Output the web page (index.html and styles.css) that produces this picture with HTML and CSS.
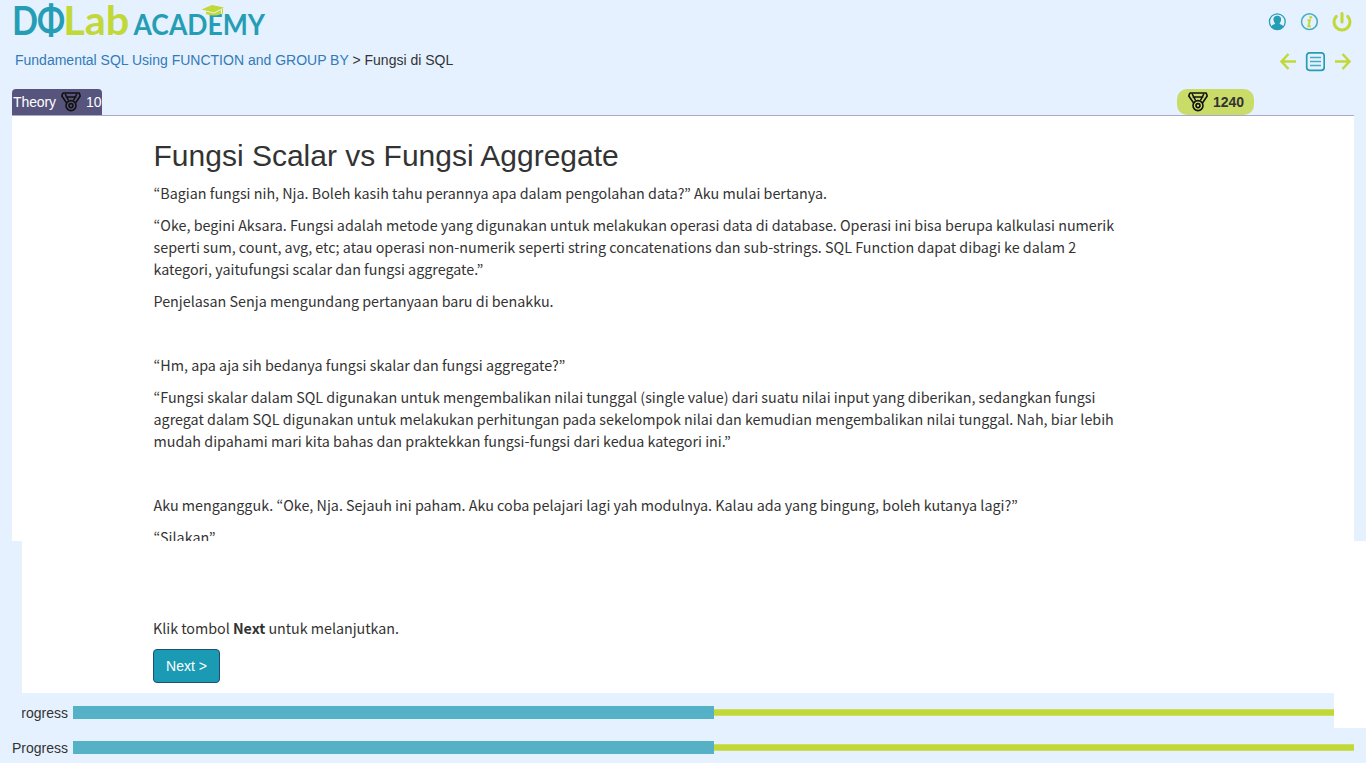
FILE: index.html
```html
<!DOCTYPE html>
<html lang="id">
<head>
<meta charset="utf-8">
<title>DQLab Academy</title>
<link rel="stylesheet" href="styles.css">
</head>
<body>
<svg class="defs" width="0" height="0">
  <symbol id="medal" viewBox="0 0 20 20">
    <g fill="none" stroke="#111" stroke-width="1.6" stroke-linejoin="round">
      <path d="M1.800 1H18.200L19.200 4L14.300 11.200M1.800 1L.8 4L5.800 11.200M1 3.500L1.800 1M4.600 5H15.400M4.200 2L7.600 8.500M15.800 2L12.400 8.500"/>
      <circle cx="10" cy="13.600" r="5"/>
      <circle cx="10" cy="13.600" r="2"/>
    </g>
  </symbol>
</svg>
<header class="top">
  <svg class="logo" width="256" height="36" viewBox="12 2 256 36">
    <g class="logo-text teal">
      <text x="12" y="34.800" font-size="41" textLength="26" lengthAdjust="spacingAndGlyphs">D</text>
      <text x="37" y="34.800" font-size="41" textLength="28" lengthAdjust="spacingAndGlyphs">Φ</text>
      <text x="133.500" y="35" font-size="29" textLength="131.500" lengthAdjust="spacingAndGlyphs">ACADEMY</text>
    </g>
    <text class="logo-text lime" x="63.200" y="34.800" font-size="41" textLength="66" lengthAdjust="spacingAndGlyphs">Lab</text>
    <path d="M201.500 9.500L212 5L224 7.500L214 12.500Z" fill="#c1d837"/>
    <path d="M206 11.500L214 13.500L221 10V14Q214 17 206 14Z" fill="#c1d837"/>
    <path d="M222.500 8.500V14" stroke="#c1d837" fill="none"/>
  </svg>
  <nav class="tools">
    <svg width="18" height="18" viewBox="0 0 18 18">
      <circle cx="9.300" cy="8.700" r="7.900" fill="#e5f1ff" stroke="#259eb5" stroke-width="1.300"/>
      <path d="M9.300 2.800C12.300 2.800 13.500 5 13 7.200C12.800 8.700 12.100 9.400 11.700 10.300V11C13.300 11.700 15.100 12 15.500 13.700Q12.800 16.700 9.300 16.700Q5.800 16.700 3.100 13.700C3.500 12 5.300 11.700 6.900 11V10.300C6.500 9.400 5.800 8.700 5.600 7.200C5.100 5 6.300 2.800 9.300 2.800Z" fill="#259eb5"/>
    </svg>
    <svg width="18" height="18" viewBox="0 0 18 18">
      <circle cx="9.400" cy="8.700" r="7.900" fill="none" stroke="#47acc0" stroke-width="1.500"/>
      <path d="M7.400 7.300H9.800L8.400 13.200H10.800" fill="none" stroke="#c1d837" stroke-width="2"/>
      <circle cx="10.700" cy="4.300" r="1.400" fill="#c1d837"/>
    </svg>
    <svg width="20" height="20" viewBox="0 0 20 20">
      <path d="M4.300 4.400A8 8 0 1 0 15.700 4.400M10 1.600V10" fill="none" stroke="#c1d837" stroke-width="3" stroke-linecap="round"/>
    </svg>
  </nav>
</header>
<div class="crumbs">
  <div class="path"><a>Fundamental SQL Using FUNCTION and GROUP BY</a> &gt; Fungsi di SQL</div>
  <nav class="pager">
    <svg width="18" height="18" viewBox="0 0 18 18"><path d="M10.500 1L3.500 8.500L10.500 16M3.500 8.500H18" fill="none" stroke="#c1d837" stroke-width="2.500"/></svg>
    <svg width="20" height="20" viewBox="0 0 20 20"><rect x="1.700" y=".8" width="17.500" height="17.500" rx="3" fill="none" stroke="#259eb5" stroke-width="1.700"/><path d="M5 5.500H16M5 9.500H16M5 13.500H16" stroke="#47acc0" stroke-width="1.400"/></svg>
    <svg width="18" height="18" viewBox="0 0 18 18"><path d="M8.500 1L15.500 8.500L8.500 16M15.500 8.500H1" fill="none" stroke="#c1d837" stroke-width="2.500"/></svg>
  </nav>
</div>
<div class="tabs">
  <div class="tab"><span class="kind">Theory</span><svg width="20" height="20"><use href="#medal"/></svg><span>10</span></div>
  <div class="score"><svg width="20" height="20"><use href="#medal"/></svg><b>1240</b></div>
</div>
<main class="lesson">
  <h1>Fungsi Scalar vs Fungsi Aggregate</h1>
  <p>“Bagian fungsi nih, Nja. Boleh kasih tahu perannya apa dalam pengolahan data?” Aku mulai bertanya.</p>
  <p>“Oke, begini Aksara. Fungsi adalah metode yang digunakan untuk melakukan operasi data di database. Operasi ini bisa berupa kalkulasi numerik<br>seperti sum, count, avg, etc; atau operasi non-numerik seperti string concatenations dan sub-strings. SQL Function dapat dibagi ke dalam 2<br>kategori, yaitufungsi scalar dan fungsi aggregate.”</p>
  <p>Penjelasan Senja mengundang pertanyaan baru di benakku.</p>
  <p>&nbsp;</p>
  <p>“Hm, apa aja sih bedanya fungsi skalar dan fungsi aggregate?”</p>
  <p>“Fungsi skalar dalam SQL digunakan untuk mengembalikan nilai tunggal (single value) dari suatu nilai input yang diberikan, sedangkan fungsi<br>agregat dalam SQL digunakan untuk melakukan perhitungan pada sekelompok nilai dan kemudian mengembalikan nilai tunggal. Nah, biar lebih<br>mudah dipahami mari kita bahas dan praktekkan fungsi-fungsi dari kedua kategori ini.”</p>
  <p>&nbsp;</p>
  <p>Aku mengangguk. “Oke, Nja. Sejauh ini paham. Aku coba pelajari lagi yah modulnya. Kalau ada yang bingung, boleh kutanya lagi?”</p>
  <p>“Silakan”</p>
</main>
<section class="continue">
  <p>Klik tombol <b>Next</b> untuk melanjutkan.</p>
  <button class="next">Next &gt;</button>
</section>
<div class="progress clipped"><span class="label">Progress</span><div class="bar"><div class="done"></div><div class="rest"></div></div></div>
<div class="progress"><span class="label">Progress</span><div class="bar"><div class="done"></div><div class="rest"></div></div></div>
</body>
</html>
```
FILE: styles.css
```css
* { box-sizing: border-box; }
body {
  margin: 0;
  height: 763px;
  overflow: hidden;
  background: #e5f1ff;
  color: #333;
  font: 14px/20px "Liberation Sans", Arial, sans-serif;
}
svg { display: block; flex: none; }
.defs { position: absolute; }
.logo { overflow: visible; }
.top {
  display: flex;
  justify-content: space-between;
  height: 50px;
  padding: 2px 14px 0 12px;
}
.logo-text { font-family: Lato, sans-serif; font-weight: 700; }
.teal { fill: #259eb5; }
.lime { fill: #c1d837; }
.tools { display: flex; align-items: center; gap: 14px; height: 39px; }
.crumbs {
  display: flex;
  justify-content: space-between;
  height: 39px;
  padding: 0 14px 0 15px;
}
.path a { color: #337ab7; }
.pager { display: flex; align-items: center; gap: 9px; height: 23px; }
.tabs {
  display: flex;
  justify-content: space-between;
  height: 27px;
  margin: 0 12px;
  border-bottom: 1px solid #a9a9cb;
}
.tab {
  display: flex;
  align-items: center;
  gap: 5px;
  width: 90px;
  padding-left: 1px;
  background: #57557d;
  color: #fff;
  border-radius: 4px 4px 0 0;
  white-space: nowrap;
}
.kind { width: 43px; letter-spacing: -.1px; }
.score {
  display: flex;
  align-items: center;
  gap: 5px;
  width: 77px;
  margin-right: 100px;
  padding-left: 11px;
  background: #cadc68;
  border-radius: 10px;
}
.lesson {
  height: 425px;
  margin: 0 12px;
  padding: 23px 0 0 141.500px;
  overflow: hidden;
  background: #fff;
}
h1 {
  margin: 0 0 10px;
  font-size: 30px;
  line-height: 33px;
  font-weight: 400;
  white-space: nowrap;
}
p {
  margin: 0 0 10px;
  font: 14.325px/22px "Noto Sans CJK KR", sans-serif;
  white-space: nowrap;
}
.continue {
  height: 152px;
  margin-left: 22px;
  padding: 76px 0 0 131px;
  background: #fff;
}
.continue p { letter-spacing: -.03px; }
.next {
  display: block;
  width: 67px;
  height: 34px;
  padding: 0;
  border: 1px solid #204d74;
  border-radius: 4px;
  background: #1b9ab4;
  color: #fff;
  font: 14px/20px "Liberation Sans", Arial, sans-serif;
}
.progress {
  display: flex;
  align-items: center;
  height: 35px;
  padding: 4px 12px 0;
}
.progress.clipped {
  margin-left: 22px;
  padding: 4px 0 0;
  border-right: 32px solid #fff;
  overflow: hidden;
}
.label { width: 61px; flex: none; }
.clipped .label { margin-left: -10px; }
.bar { display: flex; align-items: center; flex: 1; height: 13px; }
.done { width: 641px; height: 13px; background: #54b1c6; }
.rest {
  flex: 1;
  height: 7px;
  background: #c1d837;
  border: solid #cbdf65;
  border-width: 1px 0;
}
```
